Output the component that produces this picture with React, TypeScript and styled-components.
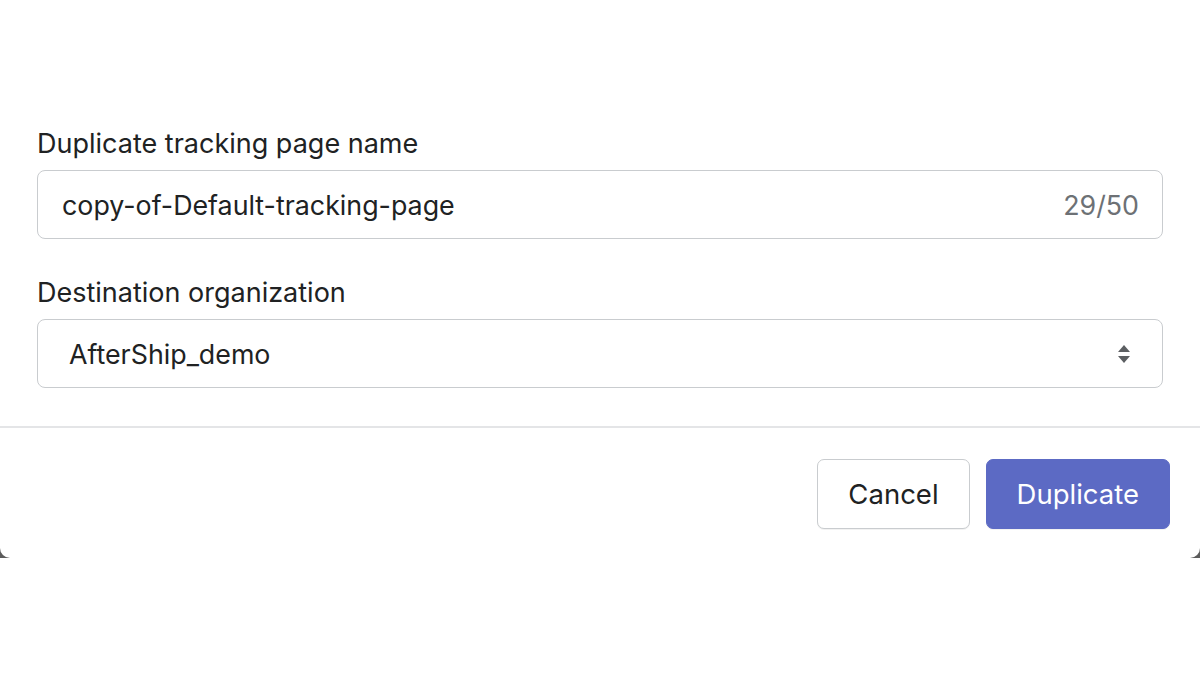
import { createGlobalStyle } from "styled-components";
import styled from "styled-components";

const GlobalStyle = createGlobalStyle`
  html, body {
    margin: 0;
    padding: 0;
    background: #ffffff;
  }
  body {
    font-family: Inter, "Noto Sans", "Liberation Sans", sans-serif;
    color: #202223;
  }
`;

const Backdrop = styled.div`
  background: #5c5c5c;
  width: 1200px;
`;

const Modal = styled.div`
  background: #ffffff;
  border-radius: 0 0 10px 10px;
  height: 558px;
  display: flex;
  flex-direction: column;
  box-sizing: border-box;
`;

const Body = styled.div`
  padding: 125px 37px 0;
  display: flex;
  flex-direction: column;
  gap: 35px;
  height: 428px;
  box-sizing: border-box;
  border-bottom: 2px solid #e4e5e7;
`;

const Field = styled.div`
  display: flex;
  flex-direction: column;
  gap: 11px;
`;

const Label = styled.label`
  font-size: 27px;
  line-height: 34px;
  padding-top: 2px;
  margin-bottom: -2px;
  color: #202223;
`;

const InputBox = styled.div<{ $pad: number }>`
  height: 69px;
  box-sizing: border-box;
  border: 1.5px solid #c9cccf;
  border-radius: 8px;
  display: flex;
  align-items: center;
  padding: 0 ${(p) => p.$pad}px;
  font-size: 26.8px;
  color: #202223;
`;

const Value = styled.span`
  flex: 1;
`;

const Counter = styled.span`
  color: #6d7175;
  margin-right: -1px;
`;

const Footer = styled.div`
  display: flex;
  justify-content: flex-end;
  gap: 16px;
  padding: 31px 30px 0;
`;

const Button = styled.button<{ $primary?: boolean }>`
  height: 70px;
  padding: 0 30px;
  border-radius: 7px;
  font-family: inherit;
  font-size: 27.5px;
  cursor: pointer;
  border: 1.5px solid ${(p) => (p.$primary ? "#5c6ac4" : "#c9cccf")};
  background: ${(p) => (p.$primary ? "#5c6ac4" : "#ffffff")};
  color: ${(p) => (p.$primary ? "#ffffff" : "#202223")};
  box-shadow: 0 1px 0 rgba(0, 0, 0, 0.05);
`;

const SelectArrows = () => (
  <svg width="14" height="18" viewBox="0 0 14 18">
    <path d="M7 0 L13 7 H1 Z" fill="#5c5f62" />
    <path d="M1 11 H13 L7 18 Z" fill="#5c5f62" />
  </svg>
);

export default function App() {
  return (
    <>
      <GlobalStyle />
      <Backdrop>
        <Modal>
          <Body>
            <Field>
              <Label>Duplicate tracking page name</Label>
              <InputBox $pad={24}>
                <Value>copy-of-Default-tracking-page</Value>
                <Counter>29/50</Counter>
              </InputBox>
            </Field>
            <Field>
              <Label>Destination organization</Label>
              <InputBox $pad={31}>
                <Value>AfterShip_demo</Value>
                <SelectArrows />
              </InputBox>
            </Field>
          </Body>
          <Footer>
            <Button>Cancel</Button>
            <Button $primary>Duplicate</Button>
          </Footer>
        </Modal>
      </Backdrop>
    </>
  );
}
